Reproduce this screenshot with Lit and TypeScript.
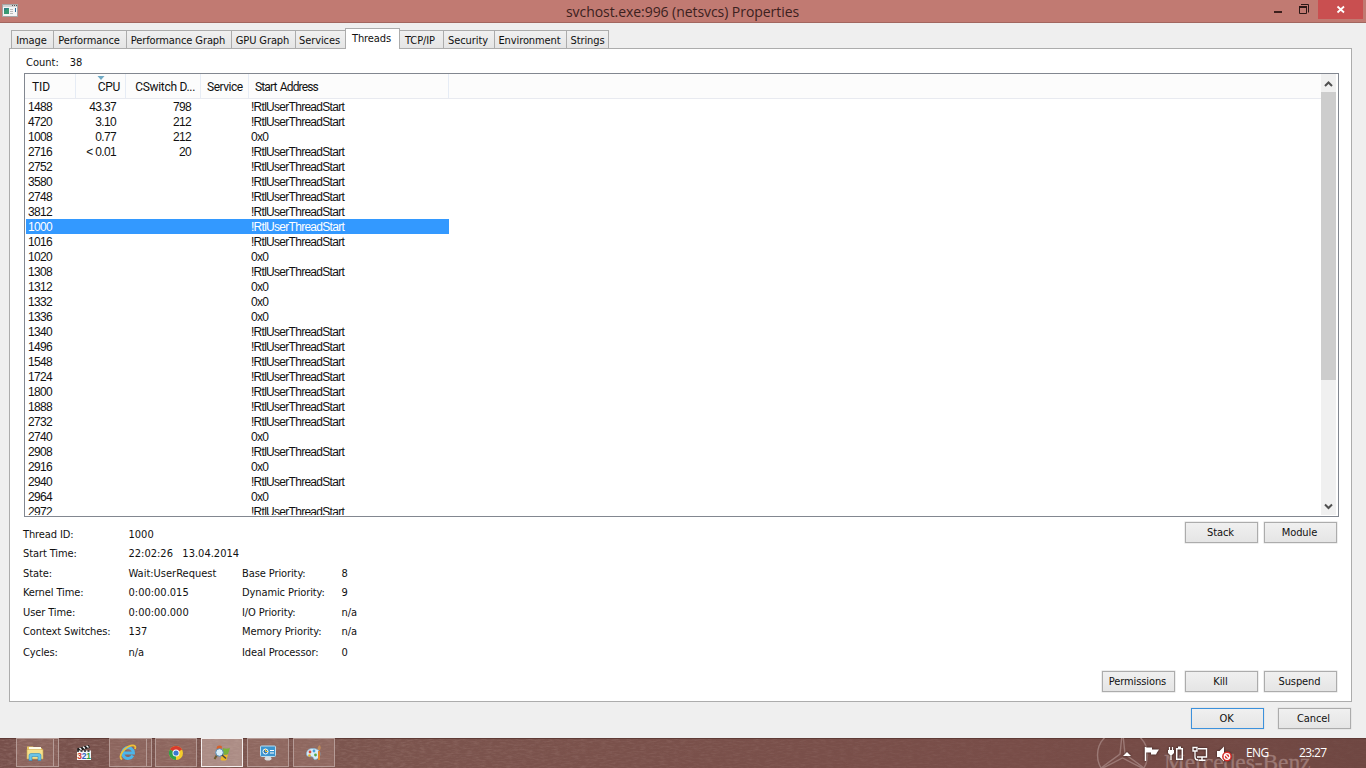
import { LitElement, html, css, svg } from 'lit';
import { customElement } from 'lit/decorators.js';
import { classMap } from 'lit/directives/class-map.js';

interface ThreadRow {
  tid: string;
  cpu?: string;
  cswitch?: string;
  address: string;
}

const START = '!RtlUserThreadStart';
const NULL_ADDR = '0x0';

const THREADS: ThreadRow[] = [
  { tid: '1488', cpu: '43.37', cswitch: '798', address: START },
  { tid: '4720', cpu: '3.10', cswitch: '212', address: START },
  { tid: '1008', cpu: '0.77', cswitch: '212', address: NULL_ADDR },
  { tid: '2716', cpu: '< 0.01', cswitch: '20', address: START },
  { tid: '2752', address: START },
  { tid: '3580', address: START },
  { tid: '2748', address: START },
  { tid: '3812', address: START },
  { tid: '1000', address: START },
  { tid: '1016', address: START },
  { tid: '1020', address: NULL_ADDR },
  { tid: '1308', address: START },
  { tid: '1312', address: NULL_ADDR },
  { tid: '1332', address: NULL_ADDR },
  { tid: '1336', address: NULL_ADDR },
  { tid: '1340', address: START },
  { tid: '1496', address: START },
  { tid: '1548', address: START },
  { tid: '1724', address: START },
  { tid: '1800', address: START },
  { tid: '1888', address: START },
  { tid: '2732', address: START },
  { tid: '2740', address: NULL_ADDR },
  { tid: '2908', address: START },
  { tid: '2916', address: NULL_ADDR },
  { tid: '2940', address: START },
  { tid: '2964', address: NULL_ADDR },
  { tid: '2972', address: START }
];

const SELECTED_TID = '1000';

// label + tab width in px
const TABS: [string, number][] = [
  ['Image', 42],
  ['Performance', 73],
  ['Performance Graph', 105],
  ['GPU Graph', 64],
  ['Services', 50],
  ['Threads', 55],
  ['TCP/IP', 43],
  ['Security', 51],
  ['Environment', 72],
  ['Strings', 43]
];

const DETAILS: string[][] = [
  ['Thread ID:', '1000', '', ''],
  ['Start Time:', '22:02:26   13.04.2014', '', ''],
  ['State:', 'Wait:UserRequest', 'Base Priority:', '8'],
  ['Kernel Time:', '0:00:00.015', 'Dynamic Priority:', '9'],
  ['User Time:', '0:00:00.000', 'I/O Priority:', 'n/a'],
  ['Context Switches:', '137', 'Memory Priority:', 'n/a'],
  ['Cycles:', 'n/a', 'Ideal Processor:', '0']
];

@customElement('title-bar')
export class TitleBar extends LitElement {
  static styles = css`
    :host {
      display: grid;
      grid-template-columns: 1fr auto 1fr;
      height: 23px;
      box-sizing: border-box;
      background: #c17a72;
      border-bottom: 1px solid #a2665f;
    }

    .app-icon {
      margin: 4px 0 0 2px;
    }

    .title {
      font: 14px/22px 'Open Sans', sans-serif;
      letter-spacing: -0.06px;
      color: #3c211e;
      padding: 1px 1px 0 0;
      white-space: nowrap;
    }

    .controls {
      display: flex;
      justify-content: flex-end;
      padding-right: 3px;
    }

    svg {
      display: block;
    }

    .close {
      width: 45px;
      height: 19px;
      background: #c94f50;
    }
  `;

  render() {
    return html`
      <svg class="app-icon" width="16" height="14" viewBox="0 0 16 14">
        <rect x="0.5" y="0.5" width="15" height="12" fill="#f4f4f4" stroke="#a5a5a5" />
        <rect x="1" y="1" width="14" height="2" fill="#d2d2d2" />
        <path d="M10 1.5h1M12 1.5h1M14 1.5h1" stroke="#555" />
        <rect x="2" y="4" width="5" height="6" fill="#2f7f86" />
        <path d="M2 10V7l5-3v6z" fill="#3a9a72" />
        <path d="M8 5.5h3M8 7.5h3M8 9.5h3" stroke="#b9b9b9" />
        <path d="M13.5 4v4" stroke="#2b6f9c" />
      </svg>
      <div class="title">svchost.exe:996 (netsvcs) Properties</div>
      <div class="controls">
        <svg width="44" height="22" viewBox="0 0 44 22">
          <rect x="0" y="11" width="8" height="2" fill="#3c1f1c" />
          <path d="M27 4.5h7.500v8" fill="none" stroke="#2c1816" />
          <path d="M25.500 7v6.500h7V7z" fill="none" stroke="#2c1816" />
          <path d="M25 7h8" stroke="#2c1816" stroke-width="2" />
        </svg>
        <svg class="close" viewBox="0 0 45 19">
          <path d="M19.500 6.500l6.500 6M26 6.500l-6.500 6" stroke="#fff" stroke-width="1.800" />
        </svg>
      </div>
    `;
  }
}

@customElement('thread-list')
export class ThreadList extends LitElement {
  static styles = css`
    :host {
      display: flex;
      height: 444px;
      box-sizing: border-box;
      border: 1px solid #828790;
      padding-bottom: 1px;
      background: #fff;
      overflow: hidden;
    }

    .body {
      flex: 1;
      overflow: hidden;
    }

    .header {
      display: grid;
      grid-template-columns: 51px 50px 75px 48px 200px 1fr;
      height: 25px;
      box-sizing: border-box;
      background: #fcfcfc;
      border-bottom: 1px solid #e8eaf0;
      font: 12px/26px Roboto, sans-serif;
      letter-spacing: -0.5px;
    }

    .col {
      position: relative;
      height: 24px;
      box-sizing: border-box;
      border-right: 1px solid #e6ecf5;
      padding: 0 5px 0 6px;
      white-space: nowrap;
    }

    .col.tid {
      padding-left: 7px;
      letter-spacing: -0.1px;
    }

    .col.right {
      text-align: right;
      letter-spacing: -0.3px;
    }

    .col.start {
      letter-spacing: -0.85px;
      word-spacing: 1px;
    }

    .col:last-child {
      border: none;
    }

    .sort {
      position: absolute;
      left: 21px;
      top: 2px;
    }

    .rows {
      margin-left: 1px;
      width: 423px;
      font-family: 'Liberation Sans', Arial, sans-serif;
      font-size: 12px;
      letter-spacing: -0.65px;
    }

    .row {
      display: grid;
      grid-template-columns: 50px 50px 75px 48px 200px;
      height: 15px;
      line-height: 16px;
    }

    .row.selected {
      background: #3399ff;
      color: #fff;
    }

    .cell {
      padding: 0 10px 0 2px;
      white-space: pre;
    }

    .cell.num {
      text-align: right;
    }

    .cell.address {
      letter-spacing: -0.72px;
    }

    .scrollbar {
      width: 15px;
      margin-right: 2px;
      background: #f0f0f0;
      display: flex;
      flex-direction: column;
    }

    .thumb {
      height: 288px;
      background: #cdcdcd;
    }

    .gap {
      flex: 1;
    }

    svg {
      display: block;
    }
  `;

  private renderRow(t: ThreadRow) {
    return html`
      <div class=${classMap({ row: true, selected: t.tid === SELECTED_TID })}>
        <span class="cell">${t.tid}</span>
        <span class="cell num">${t.cpu ?? ''}</span>
        <span class="cell num">${t.cswitch ?? ''}</span>
        <span class="cell"></span>
        <span class="cell address">${t.address}</span>
      </div>
    `;
  }

  render() {
    return html`
      <div class="body">
        <div class="header">
          <span class="col tid">TID</span>
          <span class="col right">
            <svg class="sort" width="8" height="4" viewBox="0 0 8 4"><path d="M0.500 0h7l-3.500 4z" fill="#6fa9c4" /></svg>CPU</span>
          <span class="col right">CSwitch D...</span>
          <span class="col">Service</span>
          <span class="col start">Start Address</span>
          <span class="col"></span>
        </div>
        <div class="rows">${THREADS.map((t) => this.renderRow(t))}</div>
      </div>
      <div class="scrollbar">
        <svg width="15" height="18" viewBox="0 0 15 18">
          <path d="M4 12l3.500-3.500 3.500 3.500" fill="none" stroke="#505050" stroke-width="2" />
        </svg>
        <div class="thumb"></div>
        <div class="gap"></div>
        <svg width="15" height="18" viewBox="0 0 15 18">
          <path d="M4 7.500l3.500 3.500 3.500-3.500" fill="none" stroke="#505050" stroke-width="2" />
        </svg>
      </div>
    `;
  }
}

const folderIcon = svg`
  <path d="M1 2.500h6l1 1.500h8v11H1z" fill="#e8c765" />
  <path d="M3 3h12v3H3z" fill="#fdfbe8" />
  <path d="M1 5.500h16V15H1z" fill="#f6e08c" stroke="#cfa84a" stroke-width="0.600" />
  <path d="M3 16.500v-5q0-2 2-2h8q2 0 2 2v5h-3v-4H6v4z" fill="#6cc3e6" stroke="#3389b8" stroke-width="0.600" />`;

const clapperIcon = svg`
  <path d="M2 4.500l12-3.500 .8 2.800-12 3.700z" fill="#1c1c1c" />
  <path d="M4.500 3.900l2 1.800M8 2.800l2 1.800M11.500 1.700l2 1.800" stroke="#fff" stroke-width="1.300" />
  <rect x="2" y="6.500" width="14" height="9.500" fill="#f5f5f5" />
  <path d="M2 7h14" stroke="#222" stroke-width="1.400" stroke-dasharray="2 1.500" />
  <g font-family="Liberation Sans" font-size="8.500" font-weight="700">
    <text x="2.300" y="14.700" fill="#d33a2c">3</text>
    <text x="6.800" y="14.700" fill="#2f62c4">2</text>
    <text x="11.200" y="14.700" fill="#2f9a3c">1</text>
  </g>`;

const ieIcon = svg`
  <path d="M13.800 11.500a5.400 5.400 0 1 1 .6-2.600H4.600" fill="none" stroke="#4cb5ea" stroke-width="3" />
  <path d="M3 15.500C-1.500 13 5 3.500 12 1.700c4-1 5 .8 4 3.300" fill="none" stroke="#efbf36" stroke-width="1.800" />`;

const chromeIcon = svg`
  <circle cx="9" cy="9" r="7" fill="#f4cc2b" />
  <path d="M9 9L2.900 5.500A7 7 0 0 1 15.100 5.500z" fill="#d93a2d" />
  <path d="M9 9L2.900 5.500A7 7 0 0 0 9 16z" fill="#33a04a" />
  <circle cx="9" cy="9" r="3.500" fill="#fff" />
  <circle cx="9" cy="9" r="2.600" fill="#3a78cf" />`;

const procexpIcon = svg`
  <path d="M4 2.500q2.500-2 5 0L8 8.500q-2.500-1.500-5 0z" fill="#d9622b" />
  <path d="M10 4q3 1.500 7 0l-2 6q-3 1.500-6 0z" fill="#79b33a" />
  <path d="M9 10.500q3 1 6 0L13.500 16q-3 1-6 0z" fill="#efb928" />
  <path d="M4 11L1.500 15" stroke="#6e5c30" stroke-width="2" />
  <circle cx="6.500" cy="8.500" r="3.800" fill="#d8edf9" stroke="#558ab4" />
  <path d="M9 11l4 3.500" stroke="#444" stroke-width="1.500" />`;

const controlPanelIcon = svg`
  <rect x="1.500" y="2" width="15" height="10.500" rx="1" fill="#3c95cf" stroke="#b9def2" />
  <circle cx="6.500" cy="7.500" r="2.500" fill="#2b78b4" stroke="#fff" />
  <path d="M6.500 5v2.500H9" stroke="#f1c742" fill="none" />
  <path d="M11 6.500h4M11 9h4" stroke="#fff" stroke-width="1.200" />
  <ellipse cx="9" cy="14.500" rx="3.500" ry="2" fill="#d9dde0" />`;

const paintIcon = svg`
  <path d="M8 4.500c4.500 0 7 2.300 7 5.500s-2.300 5.500-5 5.500c-2 0-1-2-2.500-2.500S1.500 13.500 1.500 10 4 4.500 8 4.500z" fill="#d8ecf7" stroke="#7fb1d2" stroke-width="0.700" />
  <circle cx="5" cy="8" r="1.400" fill="#dc4a35" />
  <circle cx="9" cy="7" r="1.400" fill="#4a9fdc" />
  <circle cx="4.500" cy="11.500" r="1.300" fill="#e8b32c" />
  <circle cx="10.500" cy="11" r="1.400" fill="#55a546" />
  <path d="M14 7v9" stroke="#e2872b" stroke-width="2" />
  <path d="M12.500 4.500q0-2.500 2.500-3.500 1.500 2.500 0 5h-2z" fill="#c08a58" />`;

@customElement('task-bar')
export class TaskBar extends LitElement {
  static styles = css`
    :host {
      display: flex;
      position: relative;
      height: 30px;
      overflow: hidden;
      background: linear-gradient(90deg, #77504b 0%, #7c564f 20%, #7a514b 45%, #784d48 75%, #6f4742 100%);
      color: #fff;
    }

    /* wallpaper showing through the translucent bar */
    .backdrop {
      position: absolute;
      left: 0;
      top: 0;
    }

    .buttons {
      display: flex;
      position: relative;
      padding-left: 16px;
      flex: 1;
    }

    .task {
      display: flex;
      box-sizing: border-box;
      width: 42px;
      height: 29px;
      margin-right: 4px;
      border: 1px solid #b59b96;
      background: rgba(190, 150, 140, 0.28);
      justify-content: center;
      align-items: center;
    }

    .task.stacked {
      width: 38px;
      margin-right: 0;
    }

    .edge {
      box-sizing: border-box;
      width: 5px;
      height: 29px;
      border: 1px solid #b59b96;
      border-left: none;
      background: rgba(190, 150, 140, 0.2);
    }

    .edge.folder {
      margin-right: 8px;
    }

    .edge.ie {
      margin-right: 3px;
    }

    .task.plain {
      border-color: transparent;
      background: none;
      width: 34px;
      margin-right: 8px;
    }

    .task.active {
      border-color: #f3eeed;
      background: rgba(220, 195, 188, 0.5);
    }

    .tray {
      display: flex;
      position: relative;
      align-items: center;
      font: 12px/30px 'Open Sans', sans-serif;
    }

    .icons {
      filter: drop-shadow(0 0 1px #2a1614);
    }

    .lang {
      width: 53px;
      padding-left: 1px;
      letter-spacing: -0.6px;
    }

    .clock {
      width: 67px;
      letter-spacing: -0.6px;
    }

    svg {
      display: block;
    }
  `;

  private renderTask(icon: unknown, kind = '') {
    return html`<div class="task ${kind}"><svg width="18" height="18" viewBox="0 0 18 18">${icon}</svg></div>`;
  }

  render() {
    return html`
      <svg class="backdrop" width="1366" height="30" viewBox="0 0 1366 30">
        <filter id="grain" x="0" y="0" width="100%" height="100%">
          <feTurbulence type="fractalNoise" baseFrequency="0.15 0.6" numOctaves="3" seed="4" />
          <feColorMatrix values="0 0 0 0 0.75  0 0 0 0 0.55  0 0 0 0 0.5  0.9 0 0 0 -0.35" />
        </filter>
        <linearGradient id="fade"><stop offset="0" stop-color="#fff" /><stop offset="0.850" stop-color="#333" /></linearGradient>
        <mask id="grain-mask"><rect width="1366" height="30" fill="url(#fade)" /></mask>
        <g mask="url(#grain-mask)"><rect width="1366" height="30" filter="url(#grain)" opacity="0.450" /></g>
        <rect width="1366" height="1" fill="#5f3b36" />
        <g fill="none" stroke="#9b7975" stroke-width="1.400">
          <circle cx="1122.500" cy="17" r="25" />
          <path d="M1122.500-8L1120 16 1101 30M1122.500-8L1125 16 1144 30M1101 31L1122.500 20 1144 31" />
        </g>
        <text x="1164" y="32" font-family="Liberation Serif" font-size="23.500" letter-spacing="0.500" textLength="147" fill="#9c7975" stroke="#9c7975" stroke-width="0.300">Mercedes-Benz</text>
      </svg>
      <div class="buttons">
        ${this.renderTask(folderIcon, 'stacked')}
        <div class="edge folder"></div>
        ${this.renderTask(clapperIcon, 'plain')}
        ${this.renderTask(ieIcon, 'stacked')}
        <div class="edge ie"></div>
        ${this.renderTask(chromeIcon)}
        ${this.renderTask(procexpIcon, 'active')}
        ${this.renderTask(controlPanelIcon)}
        ${this.renderTask(paintIcon)}
      </div>
      <div class="tray">
        <svg class="icons" width="122" height="30" viewBox="0 0 122 30">
          <path d="M0 18l4-4 4 4z" fill="#fff" />
          <path d="M22.500 9v14" stroke="#fff" stroke-width="1.500" />
          <path d="M23 9.500h6v2h7l-2 3-1 2h-5v-2h-5z" fill="#fff" />
          <path d="M46.500 9v4M49.500 9v4M48 17v5" stroke="#fff" stroke-width="1.200" />
          <path d="M45 12h6v3l-2 2h-2l-2-2z" fill="#fff" />
          <path d="M53.700 10.700h5.600v10.600h-5.600z" fill="none" stroke="#fff" stroke-width="1.500" />
          <rect x="55" y="8.500" width="3" height="2" fill="#fff" />
          <path d="M75 10.700h8.500v8.300H74" fill="none" stroke="#fff" stroke-width="1.400" />
          <path d="M79 19v3M75.500 22.300h7" stroke="#fff" stroke-width="1.400" />
          <path d="M70 9.500h4v3.500h-4zM72 13v6q0 3 3 3" fill="none" stroke="#fff" stroke-width="1.300" />
          <path d="M94 13h2.500l4.500-4.500v15L96.500 19H94z" fill="#fff" />
          <circle cx="104" cy="18.500" r="4.900" fill="#d8302c" />
          <circle cx="104" cy="18.500" r="2.800" fill="none" stroke="#fff" stroke-width="1.200" />
          <path d="M102 16.500l4 4" stroke="#fff" stroke-width="1.200" />
        </svg>
        <div class="lang">ENG</div>
        <div class="clock">23:27</div>
      </div>
    `;
  }
}

@customElement('app-root')
export class AppRoot extends LitElement {
  static styles = css`
    :host {
      display: flex;
      flex-direction: column;
      width: 1366px;
      height: 768px;
      overflow: hidden;
      background: #efefef;
      font-family: 'DejaVu Sans Condensed', 'DejaVu Sans', sans-serif;
      font-stretch: condensed;
      font-size: 11px;
      letter-spacing: -0.1px;
      color: #111;
    }

    .dialog {
      flex: 1;
      display: flex;
      flex-direction: column;
      padding: 5px 14px 0 9px;
    }

    .tabs {
      display: flex;
      align-items: flex-end;
      height: 20px;
      padding-left: 2px;
      position: relative;
      z-index: 1;
    }

    .tab {
      box-sizing: border-box;
      height: 18px;
      padding-right: 2px;
      border: 1px solid #acacac;
      border-right: none;
      background: linear-gradient(#f0f0f0, #e5e5e5);
      border-bottom: none;
      line-height: 19px;
      text-align: center;
      white-space: nowrap;
    }

    .tab:last-child {
      border-right: 1px solid #acacac;
      padding-right: 0;
    }

    .tab.active {
      height: 21px;
      margin-bottom: -1px;
      border-right: 1px solid #acacac;
      background: #fff;
      line-height: 20px;
    }

    .tab.active + .tab {
      border-left: none;
      padding-right: 3px;
    }

    .panel {
      box-sizing: border-box;
      height: 654px;
      border: 1px solid #acacac;
      background: #fff;
      padding: 4px 12px 0 14px;
      display: flex;
      flex-direction: column;
    }

    .count {
      display: flex;
      gap: 11px;
      height: 20px;
      line-height: 19px;
      padding-left: 2px;
      letter-spacing: 0;
    }

    .info {
      display: flex;
      justify-content: space-between;
      padding-top: 5px;
      height: 149px;
    }

    .details {
      display: grid;
      grid-template-columns: 105px 114px 99px 60px;
      grid-template-rows: 20px 19px 20px 19px 20px 19px 22px;
      align-content: start;
      align-items: center;
      margin: 2px 0 0 -1px;
      white-space: pre;
    }

    .value {
      letter-spacing: 0;
      padding-left: 0.5px;
    }

    .buttons {
      display: flex;
      justify-content: flex-end;
      gap: 6px;
      padding-right: 2px;
    }

    .permissions {
      margin-right: 4px;
    }

    button {
      box-sizing: border-box;
      width: 73px;
      height: 21px;
      padding: 0 2px 0 0;
      border: 1px solid #acacac;
      border-radius: 0;
      background: linear-gradient(#f0f0f0, #e5e5e5);
      box-shadow: 0 0 0 0.5px #ddd;
      font: inherit;
      letter-spacing: inherit;
      color: inherit;
    }

    button.default {
      border-color: #3c91dc;
    }

    .footer {
      display: flex;
      justify-content: flex-end;
      gap: 14px;
      padding: 6px 1px 0 0;
    }
  `;

  render() {
    return html`
      <title-bar></title-bar>
      <div class="dialog">
        <div class="tabs">
          ${TABS.map(([label, width]) => html`
            <div class=${classMap({ tab: true, active: label === 'Threads' })} style="width: ${width}px">${label}</div>
          `)}
        </div>
        <div class="panel">
          <div class="count"><span>Count:</span><span>38</span></div>
          <thread-list></thread-list>
          <div class="info">
            <div class="details">
              ${DETAILS.flat().map((text, i) => html`<span class=${classMap({ value: i % 2 === 1 })}>${text}</span>`)}
            </div>
            <div class="buttons">
              <button>Stack</button>
              <button>Module</button>
            </div>
          </div>
          <div class="buttons">
            <button class="permissions">Permissions</button>
            <button>Kill</button>
            <button>Suspend</button>
          </div>
        </div>
        <div class="footer">
          <button class="default">OK</button>
          <button>Cancel</button>
        </div>
      </div>
      <task-bar></task-bar>
    `;
  }
}

declare global {
  interface HTMLElementTagNameMap {
    'app-root': AppRoot;
    'title-bar': TitleBar;
    'thread-list': ThreadList;
    'task-bar': TaskBar;
  }
}
